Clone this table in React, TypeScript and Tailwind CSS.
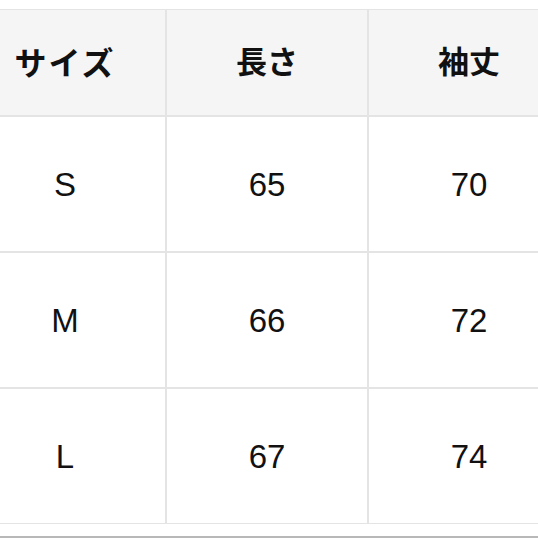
const rows = [
  { size: "S", length: "65", sleeve: "70" },
  { size: "M", length: "66", sleeve: "72" },
  { size: "L", length: "67", sleeve: "74" },
]

const font = { fontFamily: '"Liberation Sans", "Noto Sans CJK JP", sans-serif' }

export default function App() {
  return (
    <div className="relative w-[538px] h-[538px] overflow-hidden bg-white" style={font}>
      <div className="pt-[9px] ml-[-36px]">
        <table className="border-separate border-spacing-0 w-[606px] table-fixed">
          <thead>
            <tr className="h-[107px]">
              {["サイズ", "長さ", "袖丈"].map((h, i) => (
                <th
                  key={h}
                  className={
                    "w-[202px] border border-[#e4e4e4] bg-[#f5f5f5] font-bold text-[#111] text-center align-middle p-0 pt-[2px] " +
                    (i === 0 ? "text-[32px] tracking-[2px]" : "text-[31px]")
                  }
                >
                  {h}
                </th>
              ))}
            </tr>
          </thead>
          <tbody>
            {rows.map((r) => (
              <tr key={r.size} className="h-[136px]">
                {[r.size, r.length, r.sleeve].map((v, i) => (
                  <td
                    key={i}
                    className="w-[202px] border border-[#e4e4e4] bg-white text-[33px] text-[#111] text-center align-middle p-0 pt-[2px]"
                  >
                    {v}
                  </td>
                ))}
              </tr>
            ))}
          </tbody>
        </table>
      </div>
      <div className="mt-[12px] h-[2px] bg-[#b8b8b8]" />
    </div>
  )
}
